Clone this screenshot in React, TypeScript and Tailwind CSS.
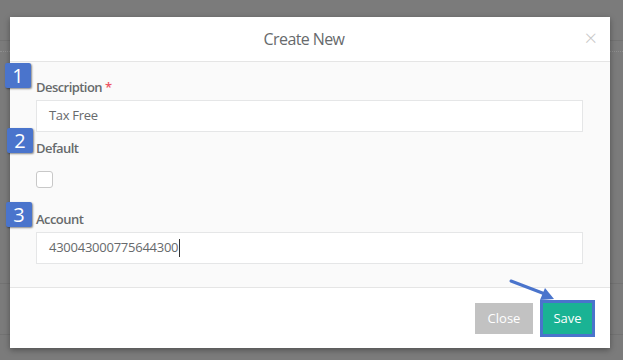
import React from "react";

function Badge({ n, className }: { n: number; className: string }) {
  return (
    <div
      className={`absolute flex h-[25px] w-[26px] items-center justify-center rounded-[2px] bg-[#4a74cc] text-[20px] leading-none text-white shadow-[1px_1px_2px_rgba(0,0,0,0.45)] ${className}`}
    >
      {n}
    </div>
  );
}

export default function App() {
  return (
    <div
      className="relative h-[360px] w-[623px] overflow-hidden bg-[#7b7b7b] pl-[10px] pt-[17px]"
      style={{ fontFamily: '"Open Sans", "Liberation Sans", sans-serif' }}
    >
      {/* dimmed page underneath */}
      <div className="absolute left-0 right-0 top-[40px] h-px bg-[#727272]" />
      <div className="absolute left-0 right-0 top-[283px] h-px bg-[#727272]" />
      <div className="absolute left-0 right-0 top-[334px] h-px bg-[#727272]" />
      <div className="absolute right-0 top-[51px] w-[14px] border-t border-dotted border-[#8e8e8e]" />
      <div className="absolute left-0 top-[51px] w-[10px] border-t border-dotted border-[#8e8e8e]" />

      <div className="relative flex h-[331px] w-[600px] flex-col bg-white shadow-[0_2px_6px_rgba(0,0,0,0.35)]">
        <div className="relative flex h-[45px] shrink-0 items-center justify-center border-b border-[#e5e5e5] pr-[12px]">
          <span className="text-[16px] font-medium tracking-[-0.6px] text-[#676a6c]">Create New</span>
          <span className="absolute right-[13px] top-[9px] text-[22px] font-light leading-none text-[#c8c8c8]">×</span>
        </div>

        <div className="flex flex-1 flex-col bg-[#fafafa] pl-[26px] pr-[27px] pt-[16px]">
          <label className="h-[18px] text-[13px] font-semibold leading-[18px] tracking-[-0.55px] text-[#676a6c]">
            Description <span className="text-[#ed5565]">*</span>
          </label>
          <div className="mt-[4px] flex h-[32px] items-center border border-[#e5e6e7] bg-white px-[12px] text-[13px] tracking-[-0.3px] text-[#676a6c]">
            Tax Free
          </div>

          <label className="mt-[7px] h-[18px] text-[13px] font-semibold leading-[18px] tracking-[-0.55px] text-[#676a6c]">Default</label>
          <div className="mt-[14px] h-[17px] w-[17px] rounded-[3px] border border-[#c8c8c8] bg-white" />

          <label className="mt-[22px] h-[18px] text-[13px] font-semibold leading-[18px] tracking-[-0.55px] text-[#676a6c]">Account</label>
          <div className="mt-[4px] flex h-[32px] items-center border border-[#e5e6e7] bg-white px-[12px] text-[13px] tracking-[-0.25px] text-[#676a6c]">
            430043000775644300
            <span className="ml-px h-[18px] w-px bg-[#333]" />
          </div>
        </div>

        <div className="flex h-[61px] shrink-0 items-start justify-end gap-[10px] border-t border-[#e5e5e5] pr-[18px] pt-[15px]">
          <button className="h-[31px] w-[58px] bg-[#c2c2c2] text-[13px] text-white">Close</button>
          <button className="h-[31px] w-[49px] bg-[#1ab394] text-[13px] text-white outline outline-[3px] outline-offset-0 outline-[#4a74cc]">
            Save
          </button>
        </div>
      </div>

      <Badge n={1} className="left-[5px] top-[63px]" />
      <Badge n={2} className="left-[7px] top-[128px]" />
      <Badge n={3} className="left-[6px] top-[202px]" />

      <svg className="absolute left-[505px] top-[276px]" width="56" height="28" viewBox="0 0 56 28">
        <line x1="6" y1="5" x2="40" y2="18" stroke="#4a74cc" strokeWidth="3" strokeLinecap="round" />
        <polygon points="49,23 35,24 40,12" fill="#4a74cc" />
      </svg>
    </div>
  );
}
